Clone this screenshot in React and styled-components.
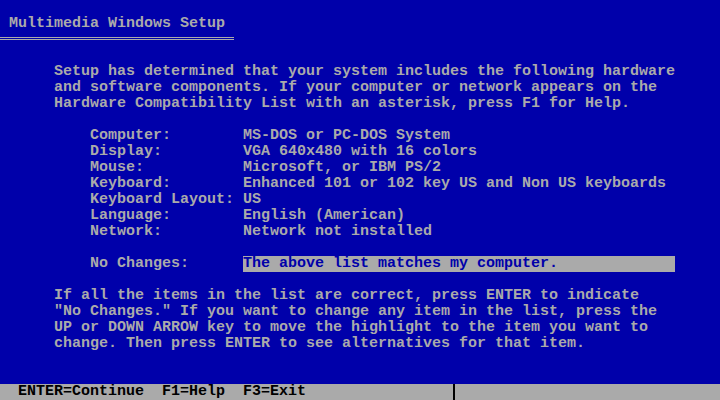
import React from 'react'
import styled, { createGlobalStyle } from 'styled-components'

const Global = createGlobalStyle`
  html, body {
    margin: 0;
    padding: 0;
    background: #0000aa;
  }
`

// text mode: 80x25 cells of 9x16 px
const Screen = styled.div`
  width: 720px;
  height: 400px;
  display: flex;
  flex-direction: column;
  background: #0000aa;
  color: #aaaaaa;
  font-family: "Liberation Mono", "DejaVu Sans Mono", monospace;
  font-size: 15px;
  font-weight: bold;
  line-height: 16px;
  white-space: pre;
  overflow: hidden;
  padding-top: 16px;
  box-sizing: border-box;
`

const Title = styled.div`
  height: 16px;
  padding-left: 9px;
`

const Rule = styled.div`
  width: 234px;
  height: 1px;
  margin: 5px 0 8px;
  border-top: 1px solid #aaaaaa;
  border-bottom: 1px solid #aaaaaa;
`

const Para = styled.div`
  padding-left: 54px;
  margin-top: ${({ gap }) => gap || 0}px;
`

const List = styled.div`
  display: grid;
  grid-template-columns: 153px auto;
  padding-left: 90px;
  margin-top: ${({ gap }) => gap || 0}px;
`

const Value = styled.span`
  display: inline-block;
  height: 16px;
  width: ${({ cols }) => (cols ? cols * 9 + 'px' : 'auto')};
  background: ${({ selected }) => (selected ? '#aaaaaa' : 'transparent')};
  color: ${({ selected }) => (selected ? '#0000aa' : 'inherit')};
`

const StatusBar = styled.div`
  margin-top: auto;
  height: 16px;
  display: grid;
  grid-template-columns: 453px 2px 1fr;
  background: #aaaaaa;
  color: #000000;
`

const StatusText = styled.span`
  padding-left: 18px;
`

const Divider = styled.span`
  background: #000000;
`

const hardware = [
  ['Computer:', 'MS-DOS or PC-DOS System'],
  ['Display:', 'VGA 640x480 with 16 colors'],
  ['Mouse:', 'Microsoft, or IBM PS/2'],
  ['Keyboard:', 'Enhanced 101 or 102 key US and Non US keyboards'],
  ['Keyboard Layout:', 'US'],
  ['Language:', 'English (American)'],
  ['Network:', 'Network not installed'],
]

export default function App () {
  return (
    <Screen>
      <Global />
      <Title>Multimedia Windows Setup</Title>
      <Rule />
      <Para gap={16}>
        {'Setup has determined that your system includes the following hardware\n' +
          'and software components. If your computer or network appears on the\n' +
          'Hardware Compatibility List with an asterisk, press F1 for Help.'}
      </Para>
      <List gap={16}>
        {hardware.map(([label, value]) => (
          <React.Fragment key={label}>
            <span>{label}</span>
            <Value>{value}</Value>
          </React.Fragment>
        ))}
      </List>
      <List gap={16}>
        <span>No Changes:</span>
        <Value selected cols={48}>The above list matches my computer.</Value>
      </List>
      <Para gap={16}>
        {'If all the items in the list are correct, press ENTER to indicate\n' +
          '"No Changes." If you want to change any item in the list, press the\n' +
          'UP or DOWN ARROW key to move the highlight to the item you want to\n' +
          'change. Then press ENTER to see alternatives for that item.'}
      </Para>
      <StatusBar>
        <StatusText>ENTER=Continue  F1=Help  F3=Exit</StatusText>
        <Divider />
        <span />
      </StatusBar>
    </Screen>
  )
}
